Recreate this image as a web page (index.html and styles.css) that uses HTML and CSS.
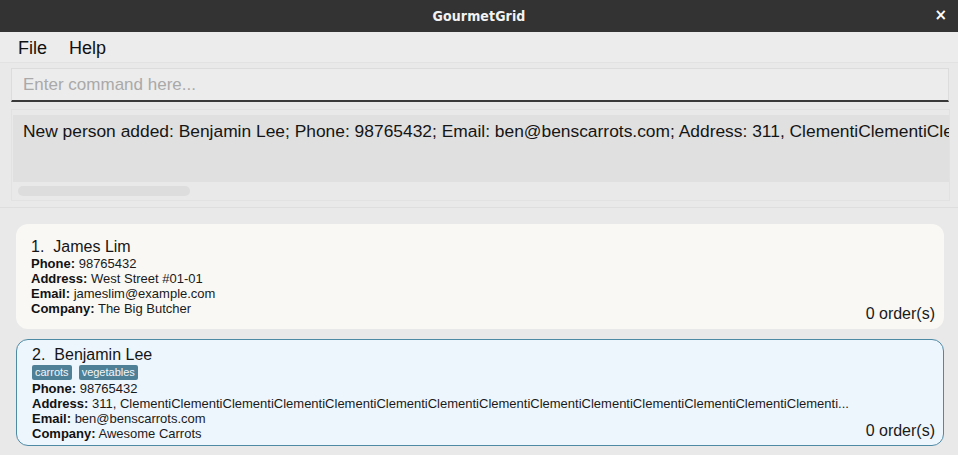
FILE: index.html
```html
<!DOCTYPE html>
<html>
<head>
<meta charset="utf-8">
<link rel="stylesheet" href="styles.css">
</head>
<body>
<div class="window">
  <div class="titlebar">
    <span class="title">GourmetGrid</span>
    <span class="close">×</span>
  </div>
  <div class="menubar">
    <span class="menu">File</span>
    <span class="menu">Help</span>
  </div>
  <div class="command-pane">
    <div class="command-box">Enter command here...</div>
  </div>
  <div class="result-pane">
    <div class="result-frame">
      <div class="result-box">New person added: Benjamin Lee; Phone: 98765432; Email: ben@benscarrots.com; Address: 311, ClementiClementiClementiClementiClementiClementi</div>
      <div class="hscroll"><div class="thumb"></div></div>
    </div>
  </div>
  <div class="list">
    <div class="card">
      <div class="card-main">
        <div class="name"><span class="idx">1.</span>James Lim</div>
        <div class="line"><b>Phone:</b> 98765432</div>
        <div class="line"><b>Address:</b> West Street #01-01</div>
        <div class="line"><b>Email:</b> jameslim@example.com</div>
        <div class="line"><b>Company:</b> The Big Butcher</div>
      </div>
      <div class="orders">0 order(s)</div>
    </div>
    <div class="card selected">
      <div class="card-main">
        <div class="name"><span class="idx">2.</span>Benjamin Lee</div>
        <div class="tags"><span class="tag">carrots</span><span class="tag">vegetables</span></div>
        <div class="line"><b>Phone:</b> 98765432</div>
        <div class="line"><b>Address:</b> 311, ClementiClementiClementiClementiClementiClementiClementiClementiClementiClementiClementiClementiClementiClementi...</div>
        <div class="line"><b>Email:</b> ben@benscarrots.com</div>
        <div class="line"><b>Company:</b> Awesome Carrots</div>
      </div>
      <div class="orders">0 order(s)</div>
    </div>
  </div>
</div>
</body>
</html>
```

FILE: styles.css
```css
* { box-sizing: border-box; }
html, body { margin: 0; padding: 0; }
body {
  width: 958px;
  height: 455px;
  overflow: hidden;
  background: #e9e9e9;
  font-family: "Liberation Sans", Arial, sans-serif;
  color: #1a1a1a;
}
.window { display: flex; flex-direction: column; height: 455px; }
.titlebar {
  height: 32px;
  background: #333333;
  color: #f2f2f2;
  display: flex;
  align-items: center;
  justify-content: center;
  position: relative;
  flex: none;
}
.title {
  font-family: "DejaVu Sans Condensed", "DejaVu Sans", sans-serif;
  font-weight: bold;
  font-size: 14px;
  letter-spacing: 0.1px;
}
.close {
  position: absolute;
  right: 11px;
  top: 6px;
  font-family: "DejaVu Sans", sans-serif;
  font-weight: bold;
  font-size: 15px;
  color: #fff;
}
.menubar {
  height: 30px;
  background: #ececec;
  display: flex;
  align-items: center;
  padding: 2px 0 0 18px;
  gap: 22px;
  flex: none;
}
.menu { font-size: 18px; color: #111; }
.command-pane {
  flex: none;
  background: #e9e9e9;
  border-top: 1px solid #e2e2e2;
  padding: 5px 9px 6px 11px;
}
.command-box {
  height: 34px;
  border: 1px solid #dcdcdc;
  border-bottom: 2px solid #3a3a3a;
  background: #ececec;
  color: #a9a9a9;
  font-size: 17px;
  padding: 6px 0 0 11px;
}
.result-pane {
  flex: none;
  padding: 1px 8px 6px 11px;
  border-bottom: 1px solid #dedede;
}
.result-frame {
  border: 1px solid #e2e2e2;
  padding: 5px 0 3px 1px;
  height: 92px;
}
.result-box {
  background: #e0e0e0;
  height: 67px;
  font-size: 17.4px;
  color: #151515;
  padding: 6px 0 0 10px;
  white-space: nowrap;
  overflow: hidden;
}
.hscroll { padding: 4px 0 0 5px; }
.thumb {
  width: 172px;
  height: 10px;
  background: #dddddd;
  border-radius: 5px;
}
.list {
  flex: 1;
  padding: 16px 14px 0 16px;
  display: flex;
  flex-direction: column;
  gap: 10px;
}
.card {
  background: #f9f8f5;
  border-radius: 12px;
  height: 105px;
  padding: 12px 8px 4px 14px;
  display: flex;
  justify-content: space-between;
  align-items: flex-end;
  border: 1px solid transparent;
}
.card.selected {
  background: #eef6fd;
  border: 1px solid #4f8aa5;
  height: 107px;
  padding: 5px 8px 4px 15px;
}
.card-main { align-self: flex-start; }
.name { font-size: 16px; line-height: 19px; color: #151515; }
.idx { margin-right: 9px; }
.line { font-size: 13px; line-height: 15px; color: #1a1a1a; white-space: nowrap; }
.line b { color: #111; }
.tags { display: flex; gap: 7px; height: 17px; padding-top: 1px; align-items: flex-start; }
.tag {
  background: #4e8198;
  color: #f2f6f8;
  font-size: 11px;
  line-height: 15px;
  padding: 0 3px;
  border-radius: 2px;
}
.orders { font-size: 16px; color: #1a1a1a; line-height: 20px; }
```
